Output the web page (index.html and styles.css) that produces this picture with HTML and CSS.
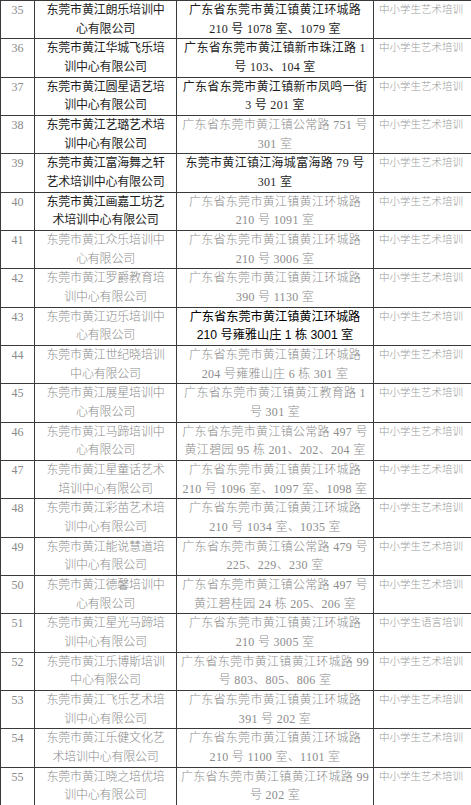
FILE: index.html
```html
<!DOCTYPE html>
<html lang="zh-CN">
<head>
<meta charset="utf-8">
<link rel="stylesheet" href="styles.css">
</head>
<body>
<table class="list">
<colgroup><col class="c-no"><col class="c-name"><col class="c-addr"><col class="c-cat"></colgroup>
<tbody>
<tr><td class="no">35</td><td class="name dark">东莞市黄江朗乐培训中<br>心有限公司</td><td class="addr dark">广东省东莞市黄江镇黄江环城路<br>210 号 1078 室、1079 室</td><td class="cat">中小学生艺术培训</td></tr>
<tr><td class="no">36</td><td class="name dark">东莞市黄江华城飞乐培<br>训中心有限公司</td><td class="addr dark">广东省东莞市黄江镇新市珠江路 1<br>号 103、104 室</td><td class="cat">中小学生艺术培训</td></tr>
<tr><td class="no">37</td><td class="name dark">东莞市黄江圆星语艺培<br>训中心有限公司</td><td class="addr dark">广东省东莞市黄江镇新市凤鸣一街<br>3 号 201 室</td><td class="cat">中小学生艺术培训</td></tr>
<tr><td class="no">38</td><td class="name dark">东莞市黄江艺璐艺术培<br>训中心有限公司</td><td class="addr">广东省东莞市黄江镇公常路 751 号<br>301 室</td><td class="cat">中小学生艺术培训</td></tr>
<tr><td class="no">39</td><td class="name dark">东莞市黄江富海舞之轩<br>艺术培训中心有限公司</td><td class="addr dark">东莞市黄江镇江海城富海路 79 号<br>301 室</td><td class="cat">中小学生艺术培训</td></tr>
<tr><td class="no">40</td><td class="name dark">东莞市黄江画嘉工坊艺<br>术培训中心有限公司</td><td class="addr">广东省东莞市黄江镇黄江环城路<br>210 号 1091 室</td><td class="cat">中小学生艺术培训</td></tr>
<tr><td class="no">41</td><td class="name">东莞市黄江众乐培训中<br>心有限公司</td><td class="addr">广东省东莞市黄江镇黄江环城路<br>210 号 3006 室</td><td class="cat">中小学生艺术培训</td></tr>
<tr><td class="no">42</td><td class="name">东莞市黄江罗爵教育培<br>训中心有限公司</td><td class="addr">广东省东莞市黄江镇黄江环城路<br>390 号 1130 室</td><td class="cat">中小学生艺术培训</td></tr>
<tr><td class="no">43</td><td class="name">东莞市黄江迈乐培训中<br>心有限公司</td><td class="addr sans">广东省东莞市黄江镇黄江环城路<br>210 号雍雅山庄 1 栋 3001 室</td><td class="cat">中小学生艺术培训</td></tr>
<tr><td class="no">44</td><td class="name">东莞市黄江世纪晓培训<br>中心有限公司</td><td class="addr">广东省东莞市黄江镇黄江环城路<br>204 号雍雅山庄 6 栋 301 室</td><td class="cat">中小学生艺术培训</td></tr>
<tr><td class="no">45</td><td class="name">东莞市黄江展星培训中<br>心有限公司</td><td class="addr">广东省东莞市黄江镇黄江教育路 1<br>号 301 室</td><td class="cat">中小学生艺术培训</td></tr>
<tr><td class="no">46</td><td class="name">东莞市黄江马蹄培训中<br>心有限公司</td><td class="addr">广东省东莞市黄江镇公常路 497 号<br>黄江碧园 95 栋 201、202、204 室</td><td class="cat">中小学生艺术培训</td></tr>
<tr><td class="no">47</td><td class="name">东莞市黄江星童话艺术<br>培训中心有限公司</td><td class="addr">广东省东莞市黄江镇黄江环城路<br>210 号 1096 室、1097 室、1098 室</td><td class="cat">中小学生艺术培训</td></tr>
<tr><td class="no">48</td><td class="name">东莞市黄江彩苗艺术培<br>训中心有限公司</td><td class="addr">广东省东莞市黄江镇黄江环城路<br>210 号 1034 室、1035 室</td><td class="cat">中小学生艺术培训</td></tr>
<tr><td class="no">49</td><td class="name">东莞市黄江能说慧道培<br>训中心有限公司</td><td class="addr">广东省东莞市黄江镇公常路 479 号<br>225、229、230 室</td><td class="cat">中小学生艺术培训</td></tr>
<tr><td class="no">50</td><td class="name">东莞市黄江德馨培训中<br>心有限公司</td><td class="addr">广东省东莞市黄江镇公常路 497 号<br>黄江碧桂园 24 栋 205、206 室</td><td class="cat">中小学生艺术培训</td></tr>
<tr><td class="no">51</td><td class="name">东莞市黄江星光马蹄培<br>训中心有限公司</td><td class="addr">广东省东莞市黄江镇黄江环城路<br>210 号 3005 室</td><td class="cat">中小学生语言培训</td></tr>
<tr><td class="no">52</td><td class="name">东莞市黄江乐博斯培训<br>中心有限公司</td><td class="addr">广东省东莞市黄江镇黄江环城路 99<br>号 803、805、806 室</td><td class="cat">中小学生艺术培训</td></tr>
<tr><td class="no">53</td><td class="name">东莞市黄江飞乐艺术培<br>训中心有限公司</td><td class="addr">广东省东莞市黄江镇黄江环城路<br>391 号 202 室</td><td class="cat">中小学生艺术培训</td></tr>
<tr><td class="no">54</td><td class="name">东莞市黄江乐健文化艺<br>术培训中心有限公司</td><td class="addr">广东省东莞市黄江镇黄江环城路<br>210 号 1100 室、1101 室</td><td class="cat">中小学生艺术培训</td></tr>
<tr><td class="no">55</td><td class="name">东莞市黄江晓之培优培<br>训中心有限公司</td><td class="addr">广东省东莞市黄江镇黄江环城路 99<br>号 202 室</td><td class="cat">中小学生艺术培训</td></tr>
</tbody>
</table>
</body>
</html>
```

FILE: styles.css
```css
html, body {
  margin: 0;
  padding: 0;
  background: #ffffff;
}

.list {
  width: 471px;
  border-collapse: collapse;
  table-layout: fixed;
  font-family: "Liberation Serif", "Noto Sans CJK SC", serif;
  font-size: 12px;
  color: #8c8c8c;
}

.c-no { width: 34px; }
.c-name { width: 142px; }
.c-addr { width: 197px; }
.c-cat { width: 98px; }

.list tr {
  height: 38.33px;
}

.list td {
  border: 1px solid #3a3a3a;
  padding: 0;
  vertical-align: top;
  line-height: 18.6px;
  white-space: nowrap;
  overflow: hidden;
}

.no {
  text-align: center;
  font-size: 12px;
  color: #8a8a8a;
}

.name {
  text-align: center;
  letter-spacing: -0.2px;
  font-weight: 300;
}

.addr {
  text-align: center;
  letter-spacing: 0.3px;
  font-weight: 300;
}

.dark {
  color: #1e1e1e;
  font-weight: 400;
}

.sans {
  font-family: "Liberation Sans", "Noto Sans CJK SC", sans-serif;
  color: #000000;
  font-size: 12.2px;
  letter-spacing: 0;
  font-weight: 400;
}

.cat {
  padding-left: 5px !important;
  font-size: 10.5px;
  color: #9a9a9a;
  font-weight: 300;
}
```
